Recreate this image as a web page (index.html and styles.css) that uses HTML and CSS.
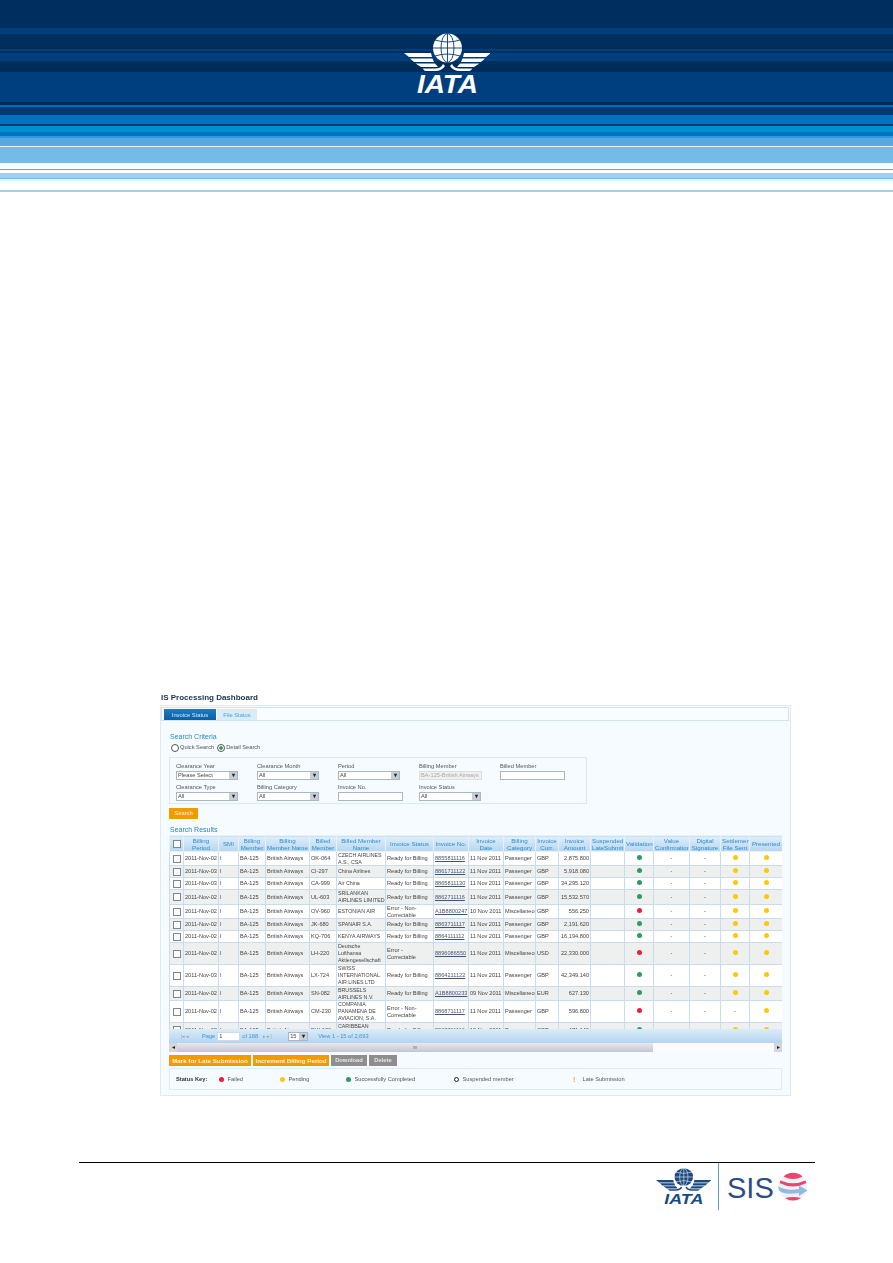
FILE: index.html
```html
<!DOCTYPE html>
<html lang="en">
<head>
    <meta charset="UTF-8">
    <title>IS Processing Dashboard</title>
    <link rel="stylesheet" href="styles.css">
</head>
<body>
    <svg class="defs" width="0" height="0">
        <symbol id="iata-mark" viewBox="0 0 86 60" preserveAspectRatio="none">
            <circle cx="43.5" cy="15" r="14.5" fill="currentColor"/>
            <g fill="none" stroke="var(--logo-bg)" stroke-width="0.9">
                <ellipse cx="43.5" cy="15" rx="6.5" ry="14.5"/>
                <path d="M43.5 .5V29.5M31 7Q43.5 11 56 7M29 15H58M31 23Q43.5 19 56 23"/>
            </g>
            <g id="wing" fill="currentColor">
                <path d="M0 20H27L28 24H5ZM6 25.5H28.5L30 29H10ZM11.500 30.500H31L34 34H17ZM18.500 35.500H31Q37 35.500 39 31L41 33Q38 38 31 38H21Z"/>
            </g>
            <use href="#wing" transform="translate(87 0) scale(-1 1)"/>
            <text class="mark-text" x="43.500" y="60" text-anchor="middle" textLength="61" lengthAdjust="spacingAndGlyphs" fill="currentColor">IATA</text>
        </symbol>
    </svg>

    <header class="banner">
        <svg class="banner-logo"><use href="#iata-mark"/></svg>
    </header>

    <main class="dashboard">
        <h1 class="page-title">IS Processing Dashboard</h1>
        <div class="panel">
            <div class="tab-bar">
                <span class="tab active">Invoice Status</span>
                <span class="tab">File Status</span>
            </div>

            <div class="panel-body">
                <h2 class="section-title">Search Criteria</h2>
                <div class="radio-row">
                    <span class="radio"></span><span>Quick Search</span>
                    <span class="radio checked"></span><span>Detail Search</span>
                </div>

                <div class="criteria">
                    <div class="field"><label>Clearance Year</label><div class="select"><span>Please Select</span><b>&#9662;</b></div></div>
                    <div class="field"><label>Clearance Month</label><div class="select"><span>All</span><b>&#9662;</b></div></div>
                    <div class="field"><label>Period</label><div class="select"><span>All</span><b>&#9662;</b></div></div>
                    <div class="field"><label>Billing Member</label><div class="text-box disabled">BA-125-British Airways</div></div>
                    <div class="field"><label>Billed Member</label><div class="text-box"></div></div>
                    <div class="field"><label>Clearance Type</label><div class="select"><span>All</span><b>&#9662;</b></div></div>
                    <div class="field"><label>Billing Category</label><div class="select"><span>All</span><b>&#9662;</b></div></div>
                    <div class="field"><label>Invoice No.</label><div class="text-box"></div></div>
                    <div class="field"><label>Invoice Status</label><div class="select"><span>All</span><b>&#9662;</b></div></div>
                </div>

                <button class="btn orange search-btn">Search</button>

                <h2 class="section-title results-title">Search Results</h2>

                <div class="grid-wrap">
                    <div class="table-clip">
                        <table class="results">
                            <colgroup>
                                <col class="c-check"><col class="c-period"><col class="c-smi"><col class="c-bmem"><col class="c-bname">
                                <col class="c-billed"><col class="c-billedname"><col class="c-status"><col class="c-no"><col class="c-date">
                                <col class="c-cat"><col class="c-curr"><col class="c-amount"><col class="c-susp"><col class="c-valid">
                                <col class="c-conf"><col class="c-sign"><col class="c-settle"><col class="c-pres">
                            </colgroup>
                            <thead>
                                <tr>
                                    <th><span class="check"></span></th>
                                    <th>Billing<br>Period</th><th>SMI</th><th>Billing<br>Member</th><th>Billing<br>Member Name</th>
                                    <th>Billed<br>Member</th><th>Billed Member<br>Name</th><th>Invoice Status</th><th>Invoice No.</th>
                                    <th>Invoice<br>Date</th><th>Billing<br>Category</th><th>Invoice<br>Curr.</th><th>Invoice<br>Amount</th>
                                    <th>Suspended<br>LateSubmit</th><th>Validation</th><th>Value<br>Confirmation</th><th>Digital<br>Signature</th>
                                    <th>Settlement<br>File Sent</th><th>Presented</th>
                                </tr>
                            </thead>
                            <tbody>
                                <tr class="tight">
                                    <td><span class="check"></span></td><td>2011-Nov-02</td><td>I</td><td>BA-125</td><td>British Airways</td><td>OK-064</td>
                                    <td>CZECH AIRLINES<br>A.S., CSA</td><td>Ready for Billing</td><td><a href="#">8855811116</a></td><td>11 Nov 2011</td><td>Passenger</td><td>GBP</td>
                                    <td class="num">2,875.800</td><td></td><td class="mid"><i class="dot green"></i></td><td class="mid">-</td><td class="mid">-</td><td class="mid"><i class="dot yellow"></i></td><td class="mid"><i class="dot yellow"></i></td>
                                </tr>
                                <tr>
                                    <td><span class="check"></span></td><td>2011-Nov-03</td><td>I</td><td>BA-125</td><td>British Airways</td><td>CI-297</td>
                                    <td>China Airlines</td><td>Ready for Billing</td><td><a href="#">8861711122</a></td><td>11 Nov 2011</td><td>Passenger</td><td>GBP</td>
                                    <td class="num">5,918.080</td><td></td><td class="mid"><i class="dot green"></i></td><td class="mid">-</td><td class="mid">-</td><td class="mid"><i class="dot yellow"></i></td><td class="mid"><i class="dot yellow"></i></td>
                                </tr>
                                <tr>
                                    <td><span class="check"></span></td><td>2011-Nov-03</td><td>I</td><td>BA-125</td><td>British Airways</td><td>CA-999</td>
                                    <td>Air China</td><td>Ready for Billing</td><td><a href="#">8865811130</a></td><td>11 Nov 2011</td><td>Passenger</td><td>GBP</td>
                                    <td class="num">34,295.120</td><td></td><td class="mid"><i class="dot green"></i></td><td class="mid">-</td><td class="mid">-</td><td class="mid"><i class="dot yellow"></i></td><td class="mid"><i class="dot yellow"></i></td>
                                </tr>
                                <tr>
                                    <td><span class="check"></span></td><td>2011-Nov-02</td><td>I</td><td>BA-125</td><td>British Airways</td><td>UL-603</td>
                                    <td>SRILANKAN<br>AIRLINES LIMITED</td><td>Ready for Billing</td><td><a href="#">8862711116</a></td><td>11 Nov 2011</td><td>Passenger</td><td>GBP</td>
                                    <td class="num">15,532.570</td><td></td><td class="mid"><i class="dot green"></i></td><td class="mid">-</td><td class="mid">-</td><td class="mid"><i class="dot yellow"></i></td><td class="mid"><i class="dot yellow"></i></td>
                                </tr>
                                <tr class="tight">
                                    <td><span class="check"></span></td><td>2011-Nov-02</td><td>I</td><td>BA-125</td><td>British Airways</td><td>OV-960</td>
                                    <td>ESTONIAN AIR</td><td>Error - Non-<br>Correctable</td><td><a href="#">A1B8800247</a></td><td>10 Nov 2011</td><td>Miscellaneous</td><td>GBP</td>
                                    <td class="num">556.250</td><td></td><td class="mid"><i class="dot red"></i></td><td class="mid">-</td><td class="mid">-</td><td class="mid"><i class="dot yellow"></i></td><td class="mid"><i class="dot yellow"></i></td>
                                </tr>
                                <tr>
                                    <td><span class="check"></span></td><td>2011-Nov-02</td><td>I</td><td>BA-125</td><td>British Airways</td><td>JK-680</td>
                                    <td>SPANAIR S.A.</td><td>Ready for Billing</td><td><a href="#">8863711117</a></td><td>11 Nov 2011</td><td>Passenger</td><td>GBP</td>
                                    <td class="num">2,191.620</td><td></td><td class="mid"><i class="dot green"></i></td><td class="mid">-</td><td class="mid">-</td><td class="mid"><i class="dot yellow"></i></td><td class="mid"><i class="dot yellow"></i></td>
                                </tr>
                                <tr>
                                    <td><span class="check"></span></td><td>2011-Nov-02</td><td>I</td><td>BA-125</td><td>British Airways</td><td>KQ-706</td>
                                    <td>KENYA AIRWAYS</td><td>Ready for Billing</td><td><a href="#">8864111112</a></td><td>11 Nov 2011</td><td>Passenger</td><td>GBP</td>
                                    <td class="num">16,194.800</td><td></td><td class="mid"><i class="dot green"></i></td><td class="mid">-</td><td class="mid">-</td><td class="mid"><i class="dot yellow"></i></td><td class="mid"><i class="dot yellow"></i></td>
                                </tr>
                                <tr>
                                    <td><span class="check"></span></td><td>2011-Nov-02</td><td>I</td><td>BA-125</td><td>British Airways</td><td>LH-220</td>
                                    <td>Deutsche<br>Lufthansa<br>Aktiengesellschaft</td><td>Error -<br>Correctable</td><td><a href="#">8896086550</a></td><td>11 Nov 2011</td><td>Miscellaneous</td><td>USD</td>
                                    <td class="num">22,330.000</td><td></td><td class="mid"><i class="dot red"></i></td><td class="mid">-</td><td class="mid">-</td><td class="mid"><i class="dot yellow"></i></td><td class="mid"><i class="dot yellow"></i></td>
                                </tr>
                                <tr>
                                    <td><span class="check"></span></td><td>2011-Nov-03</td><td>I</td><td>BA-125</td><td>British Airways</td><td>LX-724</td>
                                    <td>SWISS<br>INTERNATIONAL<br>AIR LINES LTD</td><td>Ready for Billing</td><td><a href="#">8864211122</a></td><td>11 Nov 2011</td><td>Passenger</td><td>GBP</td>
                                    <td class="num">42,349.140</td><td></td><td class="mid"><i class="dot green"></i></td><td class="mid">-</td><td class="mid">-</td><td class="mid"><i class="dot yellow"></i></td><td class="mid"><i class="dot yellow"></i></td>
                                </tr>
                                <tr class="tight">
                                    <td><span class="check"></span></td><td>2011-Nov-02</td><td>I</td><td>BA-125</td><td>British Airways</td><td>SN-082</td>
                                    <td>BRUSSELS<br>AIRLINES N.V.</td><td>Ready for Billing</td><td><a href="#">A1B8800233</a></td><td>09 Nov 2011</td><td>Miscellaneous</td><td>EUR</td>
                                    <td class="num">627.130</td><td></td><td class="mid"><i class="dot green"></i></td><td class="mid">-</td><td class="mid">-</td><td class="mid"><i class="dot yellow"></i></td><td class="mid"><i class="dot yellow"></i></td>
                                </tr>
                                <tr>
                                    <td><span class="check"></span></td><td>2011-Nov-02</td><td>I</td><td>BA-125</td><td>British Airways</td><td>CM-230</td>
                                    <td>COMPANIA<br>PANAMENA DE<br>AVIACION, S.A.</td><td>Error - Non-<br>Correctable</td><td><a href="#">8868711117</a></td><td>11 Nov 2011</td><td>Passenger</td><td>GBP</td>
                                    <td class="num">596.800</td><td></td><td class="mid"><i class="dot red"></i></td><td class="mid">-</td><td class="mid">-</td><td class="mid">-</td><td class="mid"><i class="dot yellow"></i></td>
                                </tr>
                                <tr>
                                    <td><span class="check"></span></td><td>2011-Nov-02</td><td>I</td><td>BA-125</td><td>British Airways</td><td>BW-106</td>
                                    <td>CARIBBEAN<br>AIRLINES LTD</td><td>Ready for Billing</td><td><a href="#">8867711116</a></td><td>12 Nov 2011</td><td>Passenger</td><td>GBP</td>
                                    <td class="num">471.140</td><td></td><td class="mid"><i class="dot green"></i></td><td class="mid">-</td><td class="mid">-</td><td class="mid"><i class="dot yellow"></i></td><td class="mid"><i class="dot yellow"></i></td>
                                </tr>
                            </tbody>
                        </table>
                    </div>

                    <div class="pager">
                        <span class="pager-nav">|&#9666; &#9666;</span>
                        <span class="pager-label">Page</span>
                        <span class="page-input">1</span>
                        <span class="pager-label">of 188</span>
                        <span class="pager-nav next">&#9656; &#9656;|</span>
                        <div class="select page-size"><span>15</span><b>&#9662;</b></div>
                        <span class="pager-label">View 1 - 15 of 2,693</span>
                    </div>

                    <div class="scrollbar">
                        <span class="scroll-btn">&#9666;</span>
                        <span class="scroll-thumb"></span>
                        <span class="scroll-rest"></span>
                        <span class="scroll-btn">&#9656;</span>
                    </div>
                </div>

                <div class="actions">
                    <button class="btn orange wide">Mark for Late Submission</button>
                    <button class="btn orange wide">Increment Billing Period</button>
                    <button class="btn grey">Download</button>
                    <button class="btn grey">Delete</button>
                </div>

                <div class="status-key">
                    <strong class="key-title">Status Key:</strong>
                    <span class="key-item k-failed"><i class="dot red"></i>Failed</span>
                    <span class="key-item k-pending"><i class="dot yellow"></i>Pending</span>
                    <span class="key-item k-done"><i class="dot green"></i>Successfully Completed</span>
                    <span class="key-item k-susp"><i class="ring"></i>Suspended member</span>
                    <span class="key-item"><i class="late">!</i>Late Submission</span>
                </div>
            </div>
        </div>
    </main>

    <footer class="page-footer">
        <svg class="footer-iata"><use href="#iata-mark"/></svg>
        <span class="footer-sep"></span>
        <span class="sis-text">SIS</span>
        <svg class="sis-globe" viewBox="0 0 30 30">
            <circle cx="15" cy="15" r="14" fill="#eef2f7"/>
            <path d="M5.500 4.500A14 14 0 0 1 24.500 4.500Q15 9.500 5.500 4.500Z" fill="#e8456f"/>
            <path d="M2.500 8.500Q15 14 27.500 8.500L28.500 11Q15 18 1.500 11Z" fill="#e8456f"/>
            <path d="M0 14Q8 19.500 21 17V13.500L29.500 18.500L21 24V21Q7 23.500 1 18.500Z" fill="#8fbbdf"/>
            <path d="M7 26Q15 24 23 26A14 14 0 0 1 7 26Z" fill="#e8456f"/>
        </svg>
    </footer>
</body>
</html>
```

FILE: styles.css
```css
body {
    margin: 0;
    background-color: #fff;
    font-family: "Liberation Sans", Arial, sans-serif;
    color: #444;
}
.defs {
    position: absolute;
}
.mark-text {
    font-family: "Liberation Sans", Arial, sans-serif;
    font-size: 25px;
    font-weight: bold;
    font-style: italic;
}

/* banner stripes */
.banner {
    --logo-bg: #003a75;
    height: 192px;
    padding-top: 33px;
    box-sizing: border-box;
    display: flex;
    justify-content: center;
    color: #fff;
    background: linear-gradient(to bottom,
        #002f5f 0 28px, #003e7c 28px 34px, #002f5f 34px 49px, #003e7c 49px 51px,
        #00305f 51px 53px, #003e7c 53px 61px, #00305f 61px 64px, #002c5a 64px 72px,
        #003f7f 72px 102px, #002c56 102px 105px, #0070b8 105px 107px, #003a75 107px 115px,
        #0073bf 115px 124px, #003a70 124px 126px, #0090d2 126px 132px, #0073bf 132px 136px,
        #2d9ade 136px 138px, #5aa9de 138px 146px, #e8f4fc 146px 147px, #74bbe8 147px 163px,
        #fff 163px 169px, #5aa9de 169px 170px, #fff 170px 173px, #9ed0f2 173px 178px,
        #74bbe8 178px 179px, #e4f2fc 179px 181px, #fff 181px 190px, #9ed0f2 190px 192px);
}
.banner-logo {
    width: 86px;
    height: 60px;
}

/* embedded dashboard picture */
.dashboard {
    width: 631px;
    margin: 501px 0 0 160px;
    font-size: 5.7px;
    line-height: 7px;
    filter: blur(0.35px);
}
.page-title {
    margin: 0 0 2px 1px;
    font-size: 8px;
    line-height: 10px;
    color: #1c3050;
}
.panel {
    height: 391px;
    box-sizing: border-box;
    border: 1px solid #dcebf7;
    background-color: #f5fbff;
    padding-top: 1px;
}
.tab-bar {
    display: flex;
    gap: 1px;
    height: 14px;
    box-sizing: border-box;
    margin: 0 1px 0 0;
    padding: 1px 0 0 2px;
    border: 1px solid #cfe3f3;
    background-color: #fafdff;
}
.tab {
    width: 40px;
    text-align: center;
    line-height: 12px;
    font-size: 5.800px;
    color: #4ba3dc;
    background-color: #d8ecfa;
}
.tab.active {
    width: 52px;
    color: #cfe9fb;
    background: linear-gradient(#1d7cc0, #0a5fa6);
}
.panel-body {
    padding: 0 8px;
}
.section-title {
    margin: 0;
    padding: 12px 0 0 1px;
    font-size: 7px;
    line-height: 8px;
    font-weight: normal;
    color: #2d86c5;
}
.radio-row {
    display: flex;
    align-items: center;
    height: 9px;
    margin: 2px 0 0 2px;
    color: #555;
}
.radio {
    width: 6px;
    height: 6px;
    margin-right: 1px;
    border: 0.7px solid #555;
    border-radius: 50%;
    background-color: #fff;
}
.radio.checked {
    margin-left: 3px;
    background: radial-gradient(circle, #3c9a5f 0 1.5px, #fff 2px);
}
.criteria {
    display: grid;
    grid-template-columns: repeat(5, 81px);
    grid-auto-rows: 21px;
    width: 418px;
    height: 47px;
    box-sizing: border-box;
    margin-top: 5px;
    padding: 5px 0 0 6px;
    border: 1px solid #d8e9f6;
}
.field label {
    display: block;
    height: 7px;
    color: #555;
}
.select {
    display: flex;
    width: 62px;
    height: 9px;
    margin-top: 1px;
    box-sizing: border-box;
    border: 1px solid #a9b6c4;
    background-color: #fff;
    line-height: 7px;
}
.select span {
    flex: 1;
    padding-left: 1px;
}
.select b {
    width: 8px;
    background-color: #c8ced6;
    color: #223;
    text-align: center;
    font-size: 6px;
    line-height: 7px;
}
.text-box {
    width: 65px;
    height: 9px;
    margin-top: 1px;
    box-sizing: border-box;
    border: 1px solid #a9b6c4;
    background-color: #fff;
    padding-left: 1px;
    line-height: 7px;
    overflow: hidden;
    white-space: nowrap;
}
.text-box.disabled {
    width: 63px;
    border-color: #ddd;
    background-color: #f0f0f0;
    color: #aaa;
}
.btn {
    display: block;
    height: 11px;
    padding: 0;
    border: 0;
    font-family: inherit;
    font-size: 5.800px;
    line-height: 11px;
    color: #fff2d8;
}
.btn.orange {
    background-color: #f09c00;
}
.btn.grey {
    background-color: #8e8e8e;
    color: #e6e6e6;
}
.search-btn {
    width: 29px;
    margin-top: 4px;
}
.results-title {
    padding-top: 7px;
}
.grid-wrap {
    width: 613px;
    margin-top: 1px;
}
.table-clip {
    height: 194px;
    overflow: hidden;
}
.results {
    table-layout: fixed;
    width: 613px;
    border-collapse: collapse;
    font-size: 5.600px;
    line-height: 7px;
    color: #444;
}
.c-check { width: 14px; }
.c-period { width: 35px; }
.c-smi { width: 20px; }
.c-bmem { width: 27px; }
.c-bname { width: 44px; }
.c-billed { width: 27px; }
.c-billedname { width: 49px; }
.c-status { width: 48px; }
.c-no { width: 35px; }
.c-date { width: 35px; }
.c-cat { width: 32px; }
.c-curr { width: 23px; }
.c-amount { width: 32px; }
.c-susp { width: 34px; }
.c-valid { width: 29px; }
.c-conf { width: 36px; }
.c-sign { width: 31px; }
.c-settle { width: 29px; }
.c-pres { width: 33px; }
.results th {
    height: 15px;
    padding: 0 1px;
    border: 1px solid #e6f1fa;
    background: linear-gradient(#dfeefa, #b6d6f1);
    font-weight: normal;
    font-size: 6.200px;
    color: #2f8ccb;
    white-space: nowrap;
    overflow: hidden;
}
.results td {
    height: 11px;
    padding: 0 1px;
    border: 1px solid #c9dcec;
    background-color: #fff;
    white-space: nowrap;
    overflow: hidden;
}
.results td:nth-child(7) {
    font-size: 5.300px;
}
.results tbody tr:nth-child(even) td {
    background-color: #eef0f0;
}
.results tr.tight td {
    line-height: 6.500px;
}
.results a {
    color: #44566e;
}
.results .num {
    text-align: right;
}
.results .mid {
    text-align: center;
}
.results td:first-child, .results th:first-child {
    text-align: center;
    padding: 0;
}
.check {
    display: inline-block;
    width: 6px;
    height: 6px;
    border: 1px solid #7b8894;
    background-color: #fbfbfb;
    vertical-align: middle;
}
.dot {
    display: inline-block;
    width: 5px;
    height: 5px;
    border-radius: 50%;
}
.dot.green { background-color: #2f9a63; }
.dot.yellow { background-color: #fdc70c; }
.dot.red { background-color: #ef1c3c; }
.pager {
    display: flex;
    align-items: center;
    height: 14px;
    padding-left: 12px;
    background: linear-gradient(#dbecf9, #b4d4f0);
    color: #3b95d2;
}
.pager-nav {
    width: 21px;
    font-size: 4.500px;
    color: #8aa;
}
.pager-nav.next {
    width: 25px;
    margin-left: 3px;
}
.pager-label {
    margin-right: 2px;
}
.page-input {
    width: 23px;
    height: 9px;
    box-sizing: border-box;
    margin-right: 2px;
    padding-left: 1px;
    background-color: #fff;
    color: #444;
    border: 1px solid #cddbe6;
}
.page-size {
    width: 20px;
    margin: 0 10px 0 0;
    color: #444;
}
.scrollbar {
    display: flex;
    height: 9px;
    background-color: #f4f5f7;
}
.scroll-btn {
    width: 8px;
    background-color: #d3d6da;
    color: #222;
    text-align: center;
    font-size: 6px;
    line-height: 9px;
}
.scroll-thumb {
    display: flex;
    align-items: center;
    justify-content: center;
    width: 476px;
    background: linear-gradient(#e8e8ee, #c4c6d0);
}
.scroll-thumb::after {
    content: "";
    width: 4px;
    height: 3px;
    background-color: #aeb0ba;
}
.scroll-rest {
    flex: 1;
    background-color: #fbfbfd;
}
.actions {
    display: flex;
    gap: 2px;
    margin-top: 3px;
}
.actions .wide {
    width: 82px;
    font-size: 6.200px;
    font-weight: bold;
}
.actions .wide + .wide {
    width: 76px;
}
.actions .grey {
    width: 36px;
    font-weight: bold;
}
.actions .grey:last-child {
    width: 28px;
}
.status-key {
    display: flex;
    align-items: center;
    width: 613px;
    height: 22px;
    box-sizing: border-box;
    margin-top: 2px;
    padding-left: 6px;
    border: 1px solid #dcebf7;
    color: #555;
}
.key-title {
    width: 43px;
    color: #333;
}
.key-item {
    display: flex;
    align-items: center;
    gap: 3.500px;
    width: 61px;
}
.k-pending { width: 66px; }
.k-done { width: 108px; }
.k-susp { width: 119px; }
.ring {
    width: 3px;
    height: 3px;
    border: 1.200px solid #222;
    border-radius: 50%;
}
.late {
    width: 3px;
    font-style: normal;
    font-weight: bold;
    font-size: 7px;
    color: #f5a623;
    margin-right: 3px;
}

/* page footer */
.page-footer {
    --logo-bg: #fff;
    display: flex;
    align-items: flex-start;
    width: 736px;
    height: 48px;
    margin: 66px 0 0 79px;
    border-top: 1px solid #000;
    color: #1a4a80;
}
.footer-iata {
    width: 55px;
    height: 36px;
    margin: 5px 0 0 577px;
}
.footer-sep {
    width: 1px;
    height: 47px;
    margin-left: 7px;
    background-color: #5b9bd5;
}
.sis-text {
    margin: 7px 0 0 8px;
    font-size: 29px;
    line-height: 36px;
    color: #2b4d85;
}
.sis-globe {
    width: 30px;
    height: 30px;
    margin: 9px 0 0 4px;
}
```
